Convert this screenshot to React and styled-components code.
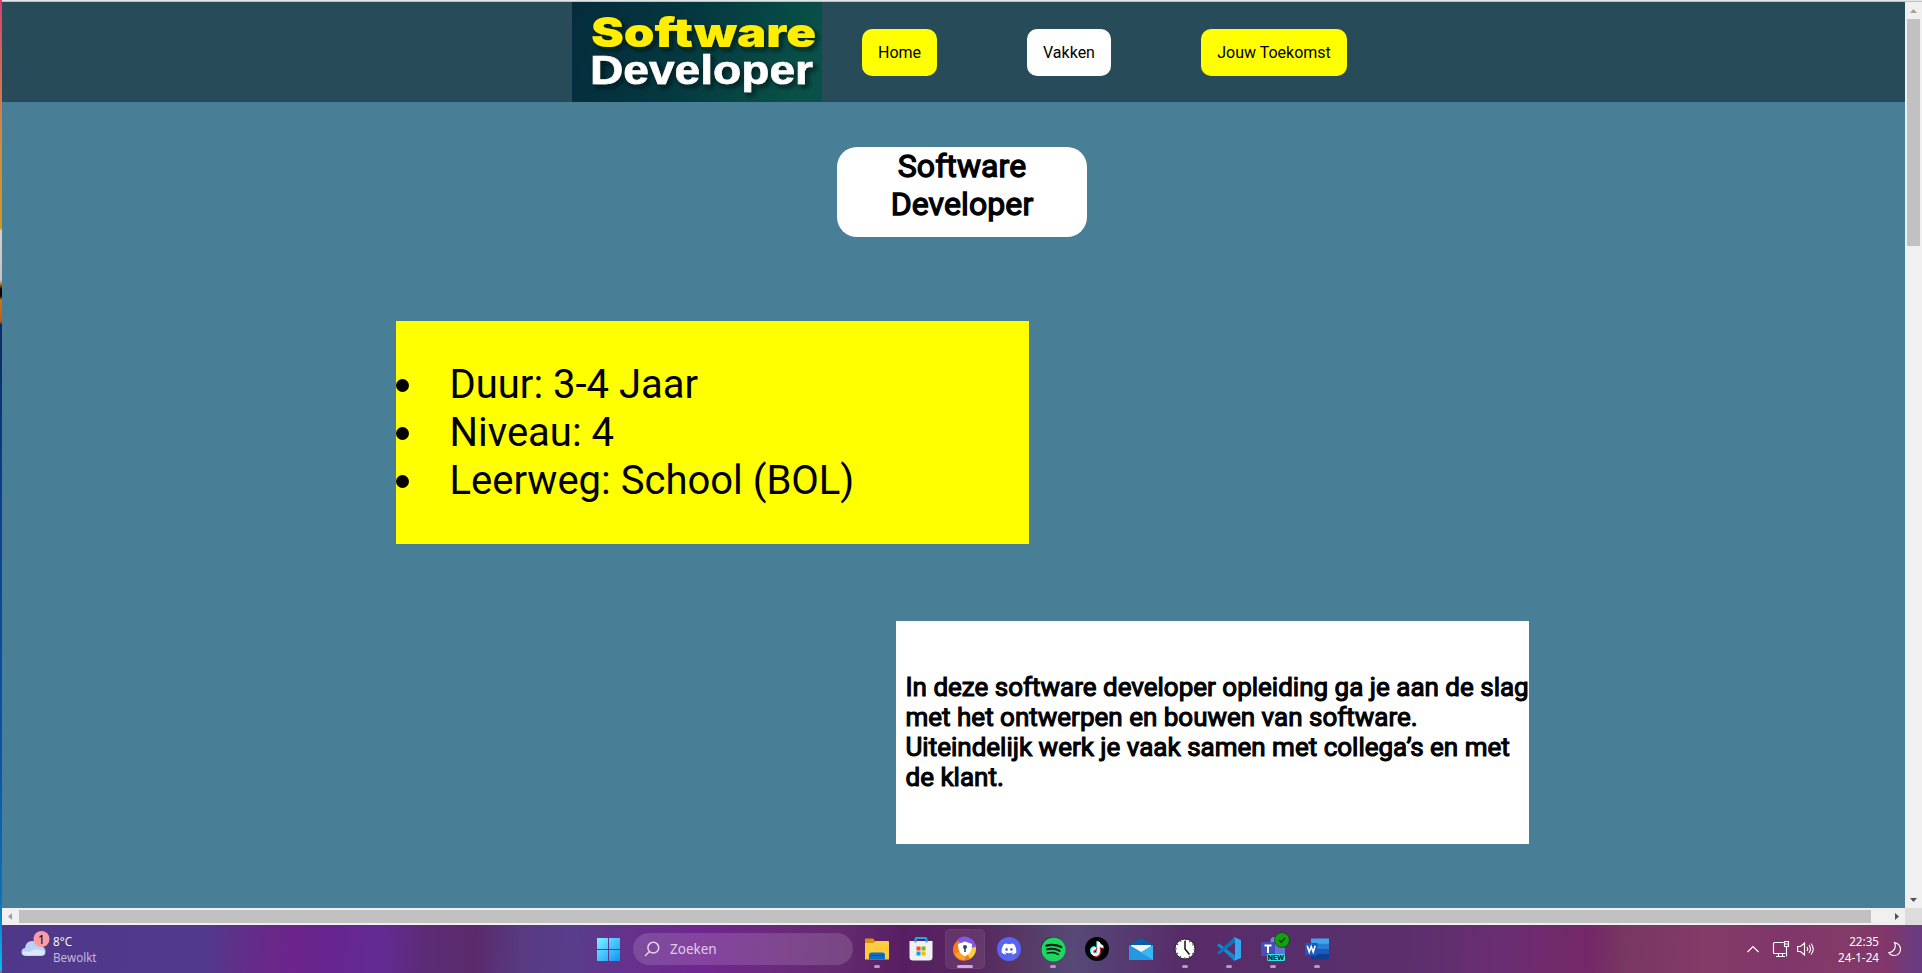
import React from "react";
import styled, { createGlobalStyle, css } from "styled-components";
import { FaDiscord, FaSpotify, FaTiktok } from "react-icons/fa";

const GlobalStyle = createGlobalStyle`
  *, *::before, *::after { box-sizing: border-box; }
  body { margin: 0; overflow: hidden; font-family: Roboto, "Liberation Sans", sans-serif; color: #000; }
  h1, h2, ul { margin: 0; padding: 0; font-weight: inherit; }
`;

const Desktop = styled.div`
  display: grid;
  grid-template-columns: 2px 1fr;
  width: 1922px;
  height: 973px;
`;

const Wallpaper = styled.div`
  background: linear-gradient(180deg, #d8406f 0, #d4605f 50px, #cc8a4a 130px, #c99a20 228px, #d8d0c8 231px,
    #c4c4c8 280px, #c0701c 284px, #0a0604 289px, #0a0604 296px, #c47a10 300px, #c85a10 321px, #0b2c62 325px,
    #0c3f8c 500px, #0b55a6 760px, #0e70b8 900px, #08b0e8 960px, #08b8ee 970px, #c84468 973px);
`;

const Screen = styled.div`
  display: flex;
  flex-direction: column;
`;

const Browser = styled.div`
  display: grid;
  grid-template-columns: 1fr 17px;
  grid-template-rows: 906px 17px;
  height: 925px;
  padding-top: 2px;
  background: linear-gradient(180deg, #e3e5e5 0 1px, #bfc3c4 1px 2px, transparent 2px);
`;

const Page = styled.div`
  background: #487f97;
`;

const Header = styled.header`
  display: flex;
  height: 100px;
  padding-left: 570px;
  background: #284b5a;
`;

const Logo = styled.svg`
  display: block;
  width: 250px;
  height: 100px;
`;

const LogoTop = styled.text`
  fill: #ffee00;
  font: 900 41px Inter, "Liberation Sans", sans-serif;
`;

const LogoBottom = styled.text`
  fill: #fff;
  stroke: #fff;
  stroke-width: 0.6px;
  font: 700 41px "Liberation Sans", sans-serif;
`;

const Nav = styled.nav`
  display: flex;
  align-items: flex-start;
  gap: 90px;
  padding: 27px 0 0 40px;
`;

const NavButton = styled.a`
  display: flex;
  align-items: center;
  justify-content: center;
  width: ${(p) => p.$width}px;
  height: 47px;
  border-radius: 10px;
  background: ${(p) => (p.$current ? "#fff" : "#ff0")};
  font-size: 16px;
`;

const fauxBold = css`
  font-weight: 400;
  -webkit-text-stroke: ${(p) => p.$stroke || 1.3}px #000;
`;

const Title = styled.h1`
  ${fauxBold}
  width: 250px;
  height: 90px;
  margin: 45px 0 0 835px;
  padding: 0 40px;
  border-radius: 20px;
  background: #fff;
  font-size: 32px;
  line-height: 38px;
  letter-spacing: 0.1px;
  text-align: center;
`;

const Facts = styled.ul`
  width: 633px;
  height: 223px;
  margin: 84px 0 0 394px;
  padding: 40px 0 0 53px;
  background: #ff0;
  font-size: 40px;
  line-height: 48px;
  list-style: none;
`;

const Fact = styled.li`
  display: flex;
  align-items: center;
  margin-left: -53px;

  &::before {
    content: "";
    width: 13px;
    height: 13px;
    margin: 0 40.5px 0 0;
    border-radius: 50%;
    background: #000;
  }
`;

const Intro = styled.h2`
  ${fauxBold}
  width: 633px;
  height: 223px;
  margin: 77px 0 0 894px;
  padding: 51px 0 0 9.5px;
  background: #fff;
  font-size: 26px;
  line-height: 30px;
  white-space: nowrap;
`;

const VBar = styled.div`
  display: flex;
  flex-direction: column;
  align-items: center;
  background: #f0f0f0;
`;

const VThumb = styled.div`
  width: 13px;
  height: 227px;
  margin-bottom: auto;
  background: #c1c1c1;
`;

const HBar = styled.div`
  display: flex;
  align-items: center;
  background: #f0f0f0;
`;

const HThumb = styled.div`
  width: 1852px;
  height: 13px;
  margin-right: auto;
  background: #c1c1c1;
`;

const Corner = styled.div`
  background: #dcdcdc;
`;

const BarArrow = styled.svg`
  display: block;
  width: 17px;
  height: 17px;
  fill: ${(p) => (p.$dim ? "#a0a0a0" : "#505050")};
`;

const Taskbar = styled.footer`
  display: flex;
  align-items: center;
  height: 48px;
  color: #fff;
  font-family: "Noto Sans", "Open Sans", sans-serif;
  font-size: 11.7px;
  line-height: 16px;
  background: linear-gradient(93deg, #4f378a 0, #51398b 205px, #602f88 240px, #6c248a 285px, #66258f 330px,
    #632a94 380px, #5b2b74 425px, #5a2a6c 475px, #573a82 520px, #583d8b 570px, #66308c 630px, #702590 700px,
    #6b297f 770px, #64296f 840px, #571f62 900px, #56255f 970px, #563764 1015px, #564977 1070px, #56396f 1130px,
    #572b68 1180px, #572e6b 1290px, #5a2f6c 1400px, #6a2d71 1500px, #742767 1585px, #783662 1620px,
    #833b68 1700px, #80366a 1780px, #833a68 1840px, #80366a 1885px, #6b3b80 1912px);
`;

const Weather = styled.div`
  display: flex;
  align-items: center;
  width: 586px;
  padding-left: 18px;
`;

const WeatherIcon = styled.svg`
  width: 30px;
  height: 30px;
  margin: -10px 3px 0 0;
`;

const WeatherText = styled.div`
  font-family: "Open Sans", "Noto Sans", sans-serif;
`;

const Muted = styled.div`
  color: #c9bfe0;
`;

const AppButton = styled.div`
  position: relative;
  display: flex;
  align-items: center;
  justify-content: center;
  width: 40px;
  height: 40px;
  margin-right: 4px;
  border-radius: 5px;
  ${(p) => p.$active && css`
    background: rgba(255, 255, 255, 0.08);
    box-shadow: inset 0 0 0 1px rgba(255, 255, 255, 0.05);
  `}

  svg { display: block; overflow: visible; }

  &::after {
    content: "";
    position: absolute;
    bottom: 1px;
    width: ${(p) => (p.$active ? 16 : p.$open ? 6 : 0)}px;
    height: 3px;
    border-radius: 2px;
    background: ${(p) => (p.$active ? "#dca0e4" : "#b29dba")};
  }
`;

const Search = styled.div`
  display: flex;
  align-items: center;
  width: 220px;
  height: 32px;
  margin: 0 4px 0 1px;
  padding-left: 11px;
  border-radius: 16px;
  background: rgba(255, 255, 255, 0.14);
  color: #e0cde8;
  font-size: 13.5px;

  svg { margin-right: 10px; }
`;

const Disc = styled.div`
  display: flex;
  align-items: center;
  justify-content: center;
  width: 24px;
  height: 24px;
  border-radius: 50%;
  background: ${(p) => p.$fill};
  color: #fff;
`;

const TikTokNote = styled(FaTiktok)`
  filter: drop-shadow(1px 1px 0 #fe2c55) drop-shadow(-1px -0.5px 0 #25f4ee);
`;

const Tray = styled.div`
  display: flex;
  align-items: center;
  margin-left: auto;
  padding-right: 20px;

  svg { display: block; fill: none; stroke: #fff; stroke-width: 1.15; }
`;

const Clock = styled.div`
  width: 64px;
  margin-right: 9px;
  padding-bottom: 1px;
  text-align: right;
`;

const apps = [
  {
    name: "Verkenner", open: true,
    icon: (
      <svg width="24" height="24" viewBox="0 0 24 24">
        <path d="M0 2.5Q0 1.5 1 1.5H8L10.5 4.5H24V10H0Z" fill="#d9930d" />
        <path d="M0 6H8L11 4H23Q24 4 24 5V22.5H0Z" fill="#fdcb3e" />
        <path d="M4 22.5V18Q4 15.5 6.5 15.5H17.5Q20 15.5 20 18V22.5Z" fill="#0b6fc8" />
        <path d="M5.5 18.5H18.5" stroke="#08549c" />
      </svg>
    ),
  },
  {
    name: "Store",
    icon: (
      <svg width="24" height="24" viewBox="0 0 24 24">
        <path d="M6.5 5V2Q6.5 1 7.5 1H16.5Q17.5 1 17.5 2V5" fill="none" stroke="#20a8ec" strokeWidth="2" />
        <path d="M.5 4H23.5V20Q23.5 23.5 20 23.5H4Q.5 23.5 .5 20Z" fill="#f1f1f3" />
        <path d="M6.5 4V5.5M17.5 4V5.5" stroke="#20a8ec" strokeWidth="2" />
        <path d="M7.5 9.5H11.5V13.5H7.5Z" fill="#f25022" />
        <path d="M12.5 9.5H16.5V13.5H12.5Z" fill="#7fba00" />
        <path d="M7.5 14.5H11.5V18.5H7.5Z" fill="#00a4ef" />
        <path d="M12.5 14.5H16.5V18.5H12.5Z" fill="#ffb900" />
      </svg>
    ),
  },
  {
    name: "Browser", active: true,
    icon: (
      <svg width="24" height="24" viewBox="0 0 24 24">
        <circle cx="12" cy="12" r="11" fill="#f9d23a" />
        <path d="M12 12L4 3A11 11 0 0 1 22.8 10Z" fill="#8158e8" />
        <path d="M12 12L17 22A11 11 0 1 1 5 3.5Z" fill="#fb7a1c" />
        <path d="M12 12L12 23A11 11 0 0 1 2 17Z" fill="#f9a52a" />
        <path d="M12 4.5L19 7Q19.5 16 12 19.5Q4.5 16 5 7Z" fill="#fff" />
        <circle cx="12" cy="10" r="2" fill="#39435a" />
        <path d="M11.2 10H12.8V15H11.2Z" fill="#39435a" />
      </svg>
    ),
  },
  { name: "Discord", icon: <Disc $fill="#5865f2"><FaDiscord size={16} /></Disc> },
  { name: "Spotify", open: true, icon: <Disc $fill="#10241a"><FaSpotify size={25} color="#1ed760" /></Disc> },
  { name: "TikTok", icon: <Disc $fill="#000"><TikTokNote size={14} /></Disc> },
  {
    name: "Mail",
    icon: (
      <svg width="24" height="24" viewBox="0 0 24 24">
        <path d="M0 8L12 1L24 8V15H0Z" fill="#0a5ca8" />
        <path d="M2 8H22V16H2Z" fill="#f3f3f3" />
        <path d="M0 8L12 15L0 23Z" fill="#1583d6" />
        <path d="M24 8L0 22V23H24Z" fill="#36b8f2" />
        <path d="M0 8L24 23H0Z" fill="#2499e2" />
      </svg>
    ),
  },
  {
    name: "Klok", open: true,
    icon: (
      <svg width="24" height="24" viewBox="0 0 24 24">
        <circle cx="12" cy="12" r="10" fill="#fff" stroke="#111" strokeWidth=".8" />
        <circle cx="12" cy="12" r="8.7" fill="none" stroke="#222" strokeWidth="1.5" strokeDasharray=".8 3.755" strokeDashoffset=".4" />
        <path d="M12 4V12L16.5 17.5" fill="none" stroke="#111" strokeWidth="1.5" />
      </svg>
    ),
  },
  {
    name: "Code", open: true,
    icon: (
      <svg width="24" height="24" viewBox="0 0 24 24">
        <path d="M0 8.3L2.2 6.5L18 18.5V23.5L16.5 23Z" fill="#1489d0" />
        <path d="M0 15.7L2.2 17.5L18 5.5V.5L16.5 1Z" fill="#0f73b8" />
        <path d="M17.5 .2L24 3V21L17.5 23.8L16.5 23L18 22V2L16.5 1Z" fill="#35a7ee" />
      </svg>
    ),
  },
  {
    name: "Teams", open: true,
    icon: (
      <svg width="24" height="24" viewBox="0 0 24 24">
        <circle cx="13.5" cy="4" r="4" fill="#7b83eb" />
        <path d="M11 8H24V17Q22 22 17 21H11Z" fill="#6970d8" />
        <rect y="5" width="14" height="14" rx="1" fill="#464eb8" />
        <path d="M3.5 8.5H10.5M7 8.5V16" stroke="#fff" strokeWidth="2" />
        <circle cx="21" cy="3" r="7.5" fill="#13a10e" stroke="#173d17" strokeWidth=".8" />
        <path d="M18 3L20.3 5.2L24 1" fill="none" stroke="#0a3208" strokeWidth="1.4" />
        <rect x="6" y="17" width="18" height="7" rx="1.5" fill="#2ee6e6" />
        <text x="15" y="23" fontSize="6.8" fontWeight="800" textAnchor="middle" fill="#06292c" fontFamily="Inter">NEW</text>
      </svg>
    ),
  },
  {
    name: "Word", open: true,
    icon: (
      <svg width="24" height="24" viewBox="0 0 24 24">
        <path d="M6 1.5H24V7H6Z" fill="#41a5ee" />
        <path d="M6 6.7H24V12.2H6Z" fill="#2b7cd3" />
        <path d="M6 12H24V17.5H6Z" fill="#185abd" />
        <path d="M6 17H24V22.5H6Z" fill="#103f91" />
        <rect y="6" width="12.5" height="12.5" rx="1" fill="#185abd" />
        <path d="M2.2 8.8L4.2 15L6.2 9.5L8.2 15L10.2 8.8" fill="none" stroke="#fff" strokeWidth="1.6" />
      </svg>
    ),
  },
];

export default function App() {
  return (
    <Desktop>
      <GlobalStyle />
      <Wallpaper />
      <Screen>
        <Browser>
          <Page>
            <Header>
              <Logo viewBox="0 0 250 100">
                <defs>
                  <linearGradient id="logoBg" x1="0" y1="0" x2="1" y2="0.15">
                    <stop offset="0" stopColor="#042b3c" />
                    <stop offset=".5" stopColor="#043840" />
                    <stop offset="1" stopColor="#085048" />
                  </linearGradient>
                  <filter id="logoShadow" x="-10%" y="-10%" width="120%" height="130%">
                    <feDropShadow dx="3" dy="3" stdDeviation="2.5" floodColor="#001014" floodOpacity=".75" />
                  </filter>
                </defs>
                <rect width="250" height="100" fill="url(#logoBg)" />
                <g filter="url(#logoShadow)">
                  <LogoTop x="19" y="44.5" textLength="225" lengthAdjust="spacingAndGlyphs">Software</LogoTop>
                  <LogoBottom x="18" y="82" textLength="223" lengthAdjust="spacingAndGlyphs">Developer</LogoBottom>
                </g>
              </Logo>
              <Nav>
                <NavButton $width={75}>Home</NavButton>
                <NavButton $width={84} $current>Vakken</NavButton>
                <NavButton $width={146}>Jouw Toekomst</NavButton>
              </Nav>
            </Header>
            <Title>Software Developer</Title>
            <Facts>
              <Fact>Duur: 3-4 Jaar</Fact>
              <Fact>Niveau: 4</Fact>
              <Fact>Leerweg: School (BOL)</Fact>
            </Facts>
            <Intro $stroke={1.1}>
              In deze software developer opleiding ga je aan de slag<br />
              met het ontwerpen en bouwen van software.<br />
              Uiteindelijk werk je vaak samen met collega’s en met<br />
              de klant.
            </Intro>
          </Page>
          <VBar>
            <BarArrow $dim viewBox="0 0 17 17"><path d="M5 11H12L8.5 7Z" /></BarArrow>
            <VThumb />
            <BarArrow viewBox="0 0 17 17"><path d="M5 7H12L8.5 11Z" /></BarArrow>
          </VBar>
          <HBar>
            <BarArrow $dim viewBox="0 0 17 17"><path d="M10 5V12L6 8.5Z" /></BarArrow>
            <HThumb />
            <BarArrow viewBox="0 0 17 17"><path d="M7 5V12L11 8.5Z" /></BarArrow>
          </HBar>
          <Corner />
        </Browser>
        <Taskbar>
          <Weather>
            <WeatherIcon viewBox="0 0 30 30">
              <path d="M6 27Q1.5 27 1.5 23Q1.5 19.5 5 19Q6 12 12 12Q17 12 18.5 17Q25.5 17 25.5 22.5Q25.5 27 21 27Z" fill="#b9d3f4" />
              <path d="M6 26Q2 26 2.5 23Q6 22 10 23Q14 19 19 21Q24 21 25 23Q24.5 26 21 26Z" fill="#dbe9fa" />
              <circle cx="21.5" cy="10" r="8" fill="#ff99a4" />
              <text x="21.5" y="14.5" fontSize="12" textAnchor="middle" fontFamily="Noto Sans">1</text>
            </WeatherIcon>
            <WeatherText>
              <div>8°C</div>
              <Muted>Bewolkt</Muted>
            </WeatherText>
          </Weather>
          <AppButton>
            <svg width="24" height="24" viewBox="0 0 24 24">
              <defs>
                <linearGradient id="winLogo" x1="0" y1="0" x2="1" y2="1">
                  <stop offset="0" stopColor="#7ef3ff" />
                  <stop offset="1" stopColor="#0f93f5" />
                </linearGradient>
              </defs>
              <path d="M1 1H12V12H1ZM13 1H24V12H13ZM1 13H12V24H1ZM13 13H24V24H13Z" fill="url(#winLogo)" />
            </svg>
          </AppButton>
          <Search>
            <svg width="16" height="16" viewBox="0 0 16 16" fill="none" stroke="#e6d4ec" strokeWidth="1.5">
              <circle cx="9.3" cy="6.7" r="5.4" />
              <path d="M5.5 10.5L1 15" />
            </svg>
            Zoeken
          </Search>
          {apps.map((app) => (
            <AppButton key={app.name} $open={app.open} $active={app.active}>{app.icon}</AppButton>
          ))}
          <Tray>
            <svg width="12" height="8" viewBox="0 0 12 8"><path d="M.5 7L6 1.5L11.5 7" /></svg>
            <svg width="38" height="18" viewBox="0 0 38 18">
              <path d="M24.5 2.5H15.5Q14.5 2.5 14.5 3.5V12.5Q14.5 13.5 15.5 13.5H26.5M19.5 13.5V16.5M23.5 13.5V16.5M17 16.5H26M25.5 1.5H29.5V6.5H25.5ZM25.5 4H29.5M27.5 6.5V16.5" />
            </svg>
            <svg width="18" height="16" viewBox="0 0 18 16">
              <path d="M.6 5.5H3.5L7.5 2V14L3.5 10.5H.6ZM10 6Q11.5 8 10 10M12 4Q15 8 12 12M14 2.5Q18.5 8 14 13.5" />
            </svg>
            <Clock>
              <div>22:35</div>
              <div>24-1-24</div>
            </Clock>
            <svg width="14" height="16" viewBox="0 0 14 16">
              <path d="M6.5 1.5Q12.5 3 12.5 8.5Q12 14.5 6 14.5Q2.5 14.5 .8 11.8Q5 11 6.5 8Q8 5 6.5 1.5Z" />
            </svg>
          </Tray>
        </Taskbar>
      </Screen>
    </Desktop>
  );
}
